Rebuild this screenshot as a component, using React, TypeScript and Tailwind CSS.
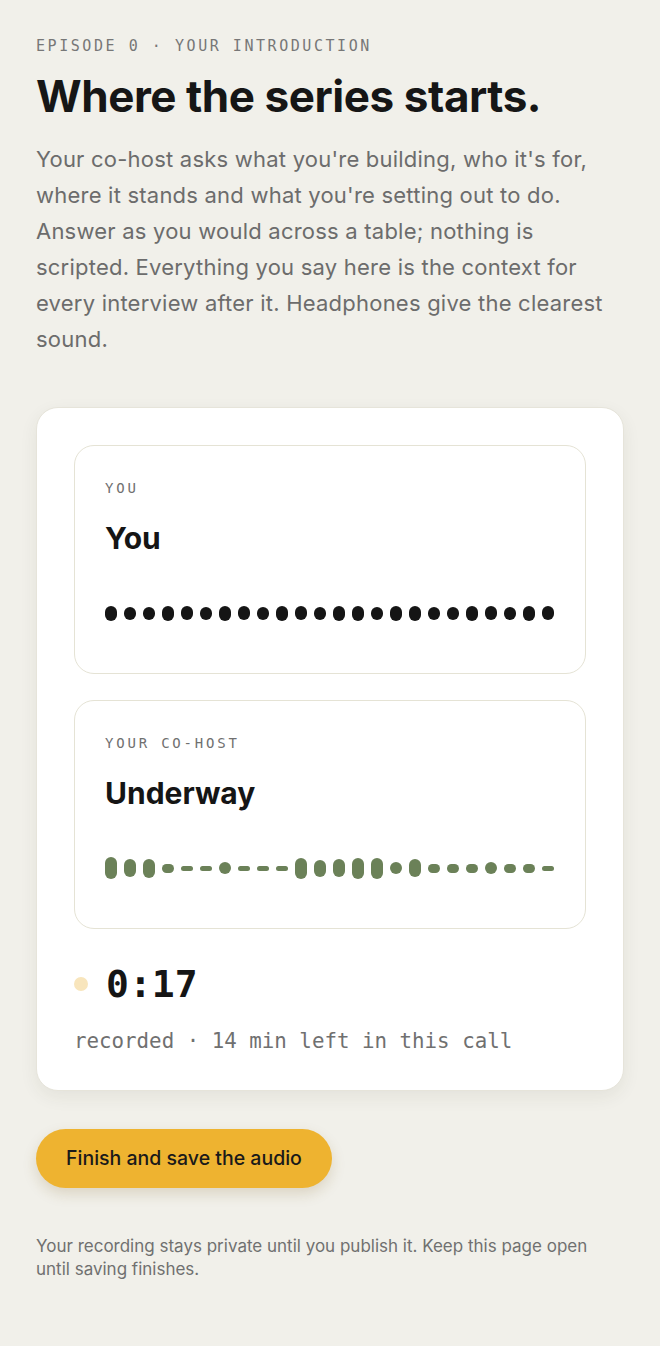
import React from 'react';

const sans = { fontFamily: 'Inter, "Noto Sans", sans-serif' };

// heights for the two level meters, 24 bars each
const youLevels = [15, 13, 13, 15, 14, 13, 15, 14, 13, 15, 14, 13, 15, 15, 13, 15, 15, 13, 13, 15, 14, 13, 15, 14];
const hostLevels = [22, 18, 19, 9, 5, 5, 12, 5, 5, 5, 21, 17, 18, 21, 21, 12, 18, 9, 9, 9, 12, 9, 9, 5];

function Meter({ levels, color }: { levels: number[]; color: string }) {
    return (
        <div className="flex h-[24px] items-center gap-[7px]">
            {levels.map((h, i) => (
                <span key={i} className={`block w-[12px] rounded-full ${color}`} style={{ height: h }} />
            ))}
        </div>
    );
}

function Speaker({ label, name, levels, color }: { label: string; name: string; levels: number[]; color: string }) {
    return (
        <div className="h-[229px] rounded-[20px] border border-[#e5e3d5] bg-white px-[30px] pt-[31px]">
            <div className="font-['DejaVu_Sans_Mono',monospace] text-[14px] leading-[22px] tracking-[0.2em] text-[#707070]">
                {label}
            </div>
            <div className="mt-[22px] text-[30px] font-bold leading-[34px] text-[#151515]">{name}</div>
            <div className="mt-[46px]">
                <Meter levels={levels} color={color} />
            </div>
        </div>
    );
}

export default function App() {
    return (
        <div className="min-h-screen bg-[#f1f0ea] px-9 pb-16 pt-9" style={sans}>
            <div className="font-['DejaVu_Sans_Mono',monospace] text-[15px] leading-5 tracking-[0.17em] text-[#777]">
                EPISODE 0 · YOUR INTRODUCTION
            </div>
            <h1 className="mt-[15px] text-[44px] font-bold leading-[50px] tracking-[-0.01em] text-[#161616]">
                Where the series starts.
            </h1>
            <p className="mt-[20px] text-[22px] leading-[36px] tracking-[0.01em] text-[#6c6c6c]">
                Your co-host asks what you're building, who it's for, where it stands and what you're setting out to
                do. Answer as you would across a table; nothing is scripted. Everything you say here is the context for
                every interview after it. Headphones give the clearest sound.
            </p>

            <div className="mt-[50px] rounded-[22px] border border-[#e6e4da] bg-white px-[37px] pb-[35px] pt-[37px] shadow-[0_6px_18px_rgba(60,55,30,0.07)]">
                <div className="flex flex-col gap-[26px]">
                    <Speaker label="YOU" name="You" levels={youLevels} color="bg-[#151515]" />
                    <Speaker label="YOUR CO-HOST" name="Underway" levels={hostLevels} color="bg-[#6b8158]" />
                </div>
                <div className="mt-[33px] flex items-center gap-[18px]">
                    <span className="block h-[14px] w-[14px] rounded-full bg-[#f8e5bc]" />
                    <span className="font-['DejaVu_Sans_Mono',monospace] text-[38px] font-bold leading-[44px] text-[#151515]">
                        0:17
                    </span>
                </div>
                <div className="mt-[21px] font-['DejaVu_Sans_Mono',monospace] text-[20.8px] leading-[28px] text-[#707070]">
                    recorded · 14 min left in this call
                </div>
            </div>

            <button className="mt-[38px] h-[59px] rounded-full bg-[#eeb330] px-[30px] text-[19.5px] font-medium text-[#1a1a1a] shadow-[0_6px_14px_rgba(120,90,20,0.18)]">
                Finish and save the audio
            </button>

            <p className="mt-[47px] text-[17px] leading-[23px] text-[#707070]">
                Your recording stays private until you publish it. Keep this page open until saving finishes.
            </p>
        </div>
    );
}
